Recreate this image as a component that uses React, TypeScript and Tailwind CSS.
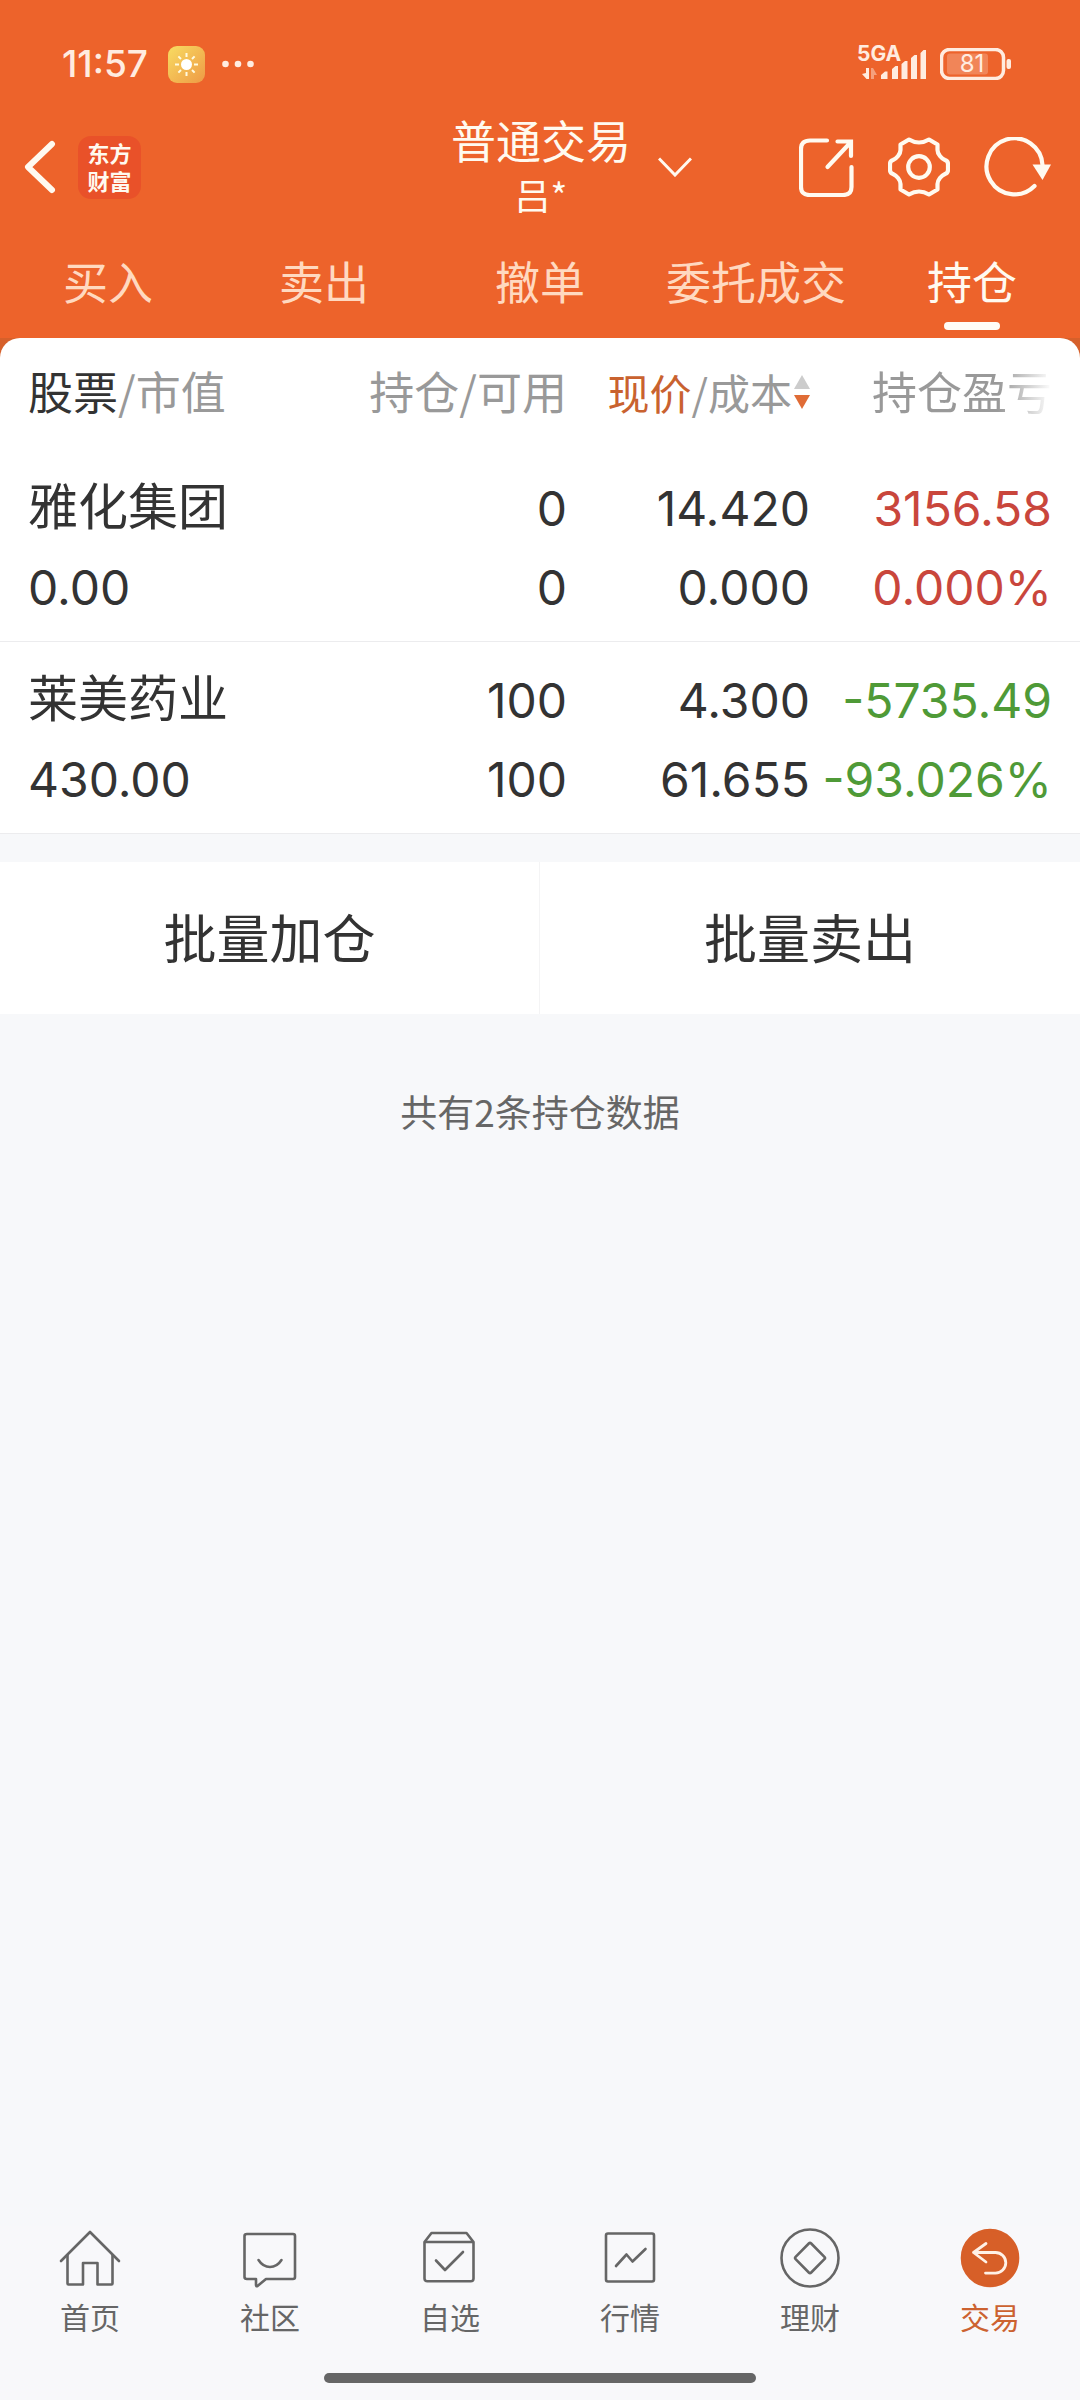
import React from "react";

const tabs = ["买入", "卖出", "撤单", "委托成交", "持仓"];

const positions = [
  {
    name: "雅化集团",
    value: "0.00",
    held: "0",
    available: "0",
    price: "14.420",
    cost: "0.000",
    profit: "3156.58",
    ratio: "0.000%",
    color: "text-[#c9463c]",
  },
  {
    name: "莱美药业",
    value: "430.00",
    held: "100",
    available: "100",
    price: "4.300",
    cost: "61.655",
    profit: "-5735.49",
    ratio: "-93.026%",
    color: "text-[#4f9a37]",
  },
];

const navItems = [
  {
    label: "首页",
    icon: (
      <>
        <path d="M3 35 32 6l29 29" />
        <path d="M9.500 29v28.500q0 1 1 1H25V37h14.500v21.500H53.500q1 0 1-1V29" />
      </>
    ),
  },
  {
    label: "社区",
    icon: (
      <>
        <path d="M9 8h46q2 0 2 2v41q0 2-2 2H28l-8.500 7q-1.500.8-1.500-1v-6H9q-2.500 0-2.500-2V10q0-2 2.500-2Z" />
        <path d="M20.500 34q4.500 7 11.500 7t11.500-7" />
      </>
    ),
  },
  {
    label: "自选",
    icon: (
      <>
        <path d="M6.500 16 13.500 7h35L55.500 16v36.500q0 2.800-2.800 2.800H9.500q-3 0-3-2.800ZM6.500 16h49" />
        <path d="M18 34.500 27 44l18-18" />
      </>
    ),
  },
  {
    label: "行情",
    icon: (
      <>
        <rect x="8" y="7.500" width="48" height="48" rx="2" />
        <path d="M18 40 28.500 28.500l6 7L47.500 23" />
      </>
    ),
  },
  {
    label: "理财",
    icon: (
      <>
        <circle cx="32" cy="32" r="28.500" />
        <path d="M30.800 17.500q1.200-1.200 2.400 0l13.200 13.300q1.200 1.200 0 2.400L33.200 46.500q-1.200 1.200-2.400 0L17.600 33.200q-1.200-1.200 0-2.400Z" />
      </>
    ),
  },
  {
    label: "交易",
    active: true,
    icon: (
      <>
        <circle cx="32" cy="32" r="28" fill="#d75f28" stroke="#d75f28" />
        <path
          d="M28 17.500 15.500 26.500 28 36M15.500 26.500H37.500a10.300 10.300 0 0 1 0 20.600H27.500"
          stroke="#fff1e6"
          strokeWidth="2.800"
        />
      </>
    ),
  },
];

const StatusBar = () => (
  <div className="flex h-28 items-center justify-between pt-4 pr-[69px] pl-[62px] text-[#ffece0]">
    <div className="flex items-center gap-5">
      <span className="font-['Inter',sans-serif] text-[37px] leading-10 font-medium">11:57</span>
      <svg width="37" height="37" viewBox="0 0 37 37" aria-hidden="true">
        <defs>
          <linearGradient id="sun" x1="0" y1="0" x2="1" y2="1">
            <stop offset="0" stopColor="#f8dc62" />
            <stop offset="1" stopColor="#ee9a45" />
          </linearGradient>
        </defs>
        <rect width="37" height="37" rx="9" fill="url(#sun)" />
        <circle cx="18.500" cy="18.500" r="5.500" fill="#fff" />
        <path
          d="M18.500 7v4M18.500 26v4M7 18.500h4M26 18.500h4M10.400 10.400l2.600 2.600M24 24l2.600 2.600M10.400 26.600 13 24M24 13l2.600-2.600"
          stroke="#fffbe0"
          strokeWidth="2"
        />
      </svg>
      <svg className="-ml-1" width="34" height="8" viewBox="0 0 34 8" fill="currentColor" aria-hidden="true">
        <circle cx="4.500" cy="4" r="3.300" />
        <circle cx="17" cy="4" r="3.300" />
        <circle cx="29.500" cy="4" r="3.300" />
      </svg>
    </div>
    <div className="flex items-center gap-[14px]">
      <div className="relative h-9 w-[68px]">
        <span className="absolute -top-[2px] -left-px font-['Inter',sans-serif] text-[21px] leading-5 font-bold">5GA</span>
        <svg width="68" height="36" viewBox="0 0 68 36" fill="currentColor" aria-hidden="true">
          <path d="M8 22h3v11H8.500L4 28l4-1Z" />
          <path d="M13 33h3v-4h3l-4-7h-2Z" opacity=".45" />
          <path d="M23 33v-4l4-3.500h2.500V33ZM34 33V23l3.500-3H40v13ZM43.500 33V18l3.500-3h2.500v18ZM53 33V12l3.500-3H59v24ZM62.500 33V7l3-3H68v29Z" />
        </svg>
      </div>
      <div className="relative flex h-8 w-[71px] items-center">
        <svg className="absolute inset-0" width="71" height="32" viewBox="0 0 71 32" aria-hidden="true">
          <rect x="1.500" y="1.500" width="62" height="29" rx="8" fill="none" stroke="currentColor" strokeWidth="3.500" />
          <rect x="7" y="5.500" width="41" height="21" rx="3" fill="currentColor" opacity=".25" />
          <rect x="66.500" y="11" width="4.500" height="10" rx="2" fill="currentColor" />
        </svg>
        <span className="w-[64px] text-center font-['Inter',sans-serif] text-2xl leading-8">81</span>
      </div>
    </div>
  </div>
);

const AppBar = () => (
  <div className="grid h-28 grid-cols-[1fr_auto_1fr] items-center pr-7 pb-[2px] pl-6 text-[#fffaf0]">
    <div className="flex items-center gap-[22px]">
      <button type="button" aria-label="返回">
        <svg width="32" height="54" viewBox="0 0 32 54" fill="none" stroke="currentColor" strokeWidth="6" strokeLinecap="round" strokeLinejoin="round">
          <path d="M28 4 4 27l24 23" />
        </svg>
      </button>
      <a
        href="#home"
        className="flex size-[63px] items-center justify-center rounded-[13px] bg-[#e95129] pb-[2px] text-center font-['Noto_Sans_CJK_SC',sans-serif] text-[22px] leading-7 font-bold"
      >
        东方
        <br />
        财富
      </a>
    </div>
    <button type="button" className="flex items-center gap-[27px] pl-[67px]">
      <span className="flex flex-col items-center pb-[2px]">
        <span className="text-[45px] leading-[56px]">普通交易</span>
        <span className="text-4xl leading-[52px]">吕*</span>
      </span>
      <svg width="34" height="20" viewBox="0 0 34 20" fill="none" stroke="currentColor" strokeWidth="3">
        <path d="M1 1.500 17 18 33 1.500" />
      </svg>
    </button>
    <div className="flex items-center justify-end gap-[34px]">
      <button type="button" aria-label="分享">
        <svg width="55" height="59" viewBox="0 0 55 59" fill="none" stroke="currentColor" strokeWidth="4.200" strokeLinecap="round">
          <path d="M28 2.500H11q-9 0-9 8.500v38q0 8 8.500 8H44q8.500 0 8.500-8V29" />
          <path d="M28.500 29 51 5M38.500 3.500H52V18" />
        </svg>
      </button>
      <button type="button" aria-label="设置">
        <svg width="62" height="60" viewBox="0 0 62 60" fill="none" stroke="currentColor" strokeWidth="4.200" strokeLinejoin="round">
          <path d="M21 2.500Q31 8.500 41 2.500l8.500 5V13c0 4 4 8.500 7.500 10q3 1 3 4v6q0 3-3 4c-3.500 1.500-7.500 6-7.500 10v5.500l-8.500 5q-10-6-20 0l-8.500-5V47c0-4-4-8.500-7.500-10Q2 36 2 33v-6q0-3 3-4c3.500-1.500 7.500-6 7.500-10V7.500Z" />
          <circle cx="31" cy="30" r="10.800" />
        </svg>
      </button>
      <button type="button" aria-label="刷新">
        <svg width="68" height="60" viewBox="0 0 68 60" fill="none" stroke="currentColor" strokeWidth="4.200" strokeLinecap="round">
          <path d="M50.500 49A28 28 0 1 1 58.500 28" />
          <path d="M48.500 27.500H67L58.500 43Z" fill="currentColor" stroke="none" />
        </svg>
      </button>
    </div>
  </div>
);

const Tabs = () => (
  <nav className="grid grid-cols-5 pt-8 pb-2">
    {tabs.map((tab) => {
      const active = tab === "持仓";
      return (
        <button key={tab} type="button" className="flex flex-col items-center gap-4">
          <span className={`text-[45px] leading-[50px] ${active ? "text-[#fffaf0]" : "text-[#ffd9c0]"}`}>{tab}</span>
          <span className={`h-2 w-14 rounded-full ${active ? "bg-[#fffcf6]" : ""}`} />
        </button>
      );
    })}
  </nav>
);

const Positions = () => (
  <table className="w-full table-fixed rounded-t-[20px] bg-white text-right text-[#333]">
    <thead>
      <tr className="h-28 text-[45px] leading-[60px] whitespace-nowrap text-[#999]">
        <th className="w-[30%] pb-[6px] pl-7 text-left font-normal">
          <span className="text-[#333]">股票</span>/市值
        </th>
        <th className="w-[22.5%] pb-[6px] font-normal">持仓/可用</th>
        <th className="w-[22.5%] pb-[6px] font-normal">
          <button type="button" className="inline-flex items-center text-[42px]">
            <span className="text-[#c9622f]">现价</span>/成本
            <svg className="ml-[2px]" width="16" height="34" viewBox="0 0 16 34" aria-hidden="true">
              <path d="M8 0 16 14H0Z" fill="#ccc" />
              <path d="M8 34 16 20H0Z" fill="#e06c36" />
            </svg>
          </button>
        </th>
        <th className="w-[25%] pr-7 pb-[6px] font-normal">
          <span className="bg-linear-to-r from-[#999] from-70% to-white bg-clip-text text-transparent">持仓盈亏</span>
        </th>
      </tr>
    </thead>
    <tbody>
      {positions.map((p) => (
        <tr key={p.name} className="border-b border-[#ececee] font-['Inter',sans-serif] text-5xl leading-[79px]">
          <td className="pt-[19px] pb-[14px] pl-7 text-left">
            <div className="pb-[10px] font-['Noto_Sans_CJK_SC',sans-serif] text-[50px] leading-[69px]">{p.name}</div>
            <div>{p.value}</div>
          </td>
          <td className="pt-[19px] pb-[14px]">
            <div>{p.held}</div>
            <div>{p.available}</div>
          </td>
          <td className="pt-[19px] pb-[14px]">
            <div>{p.price}</div>
            <div>{p.cost}</div>
          </td>
          <td className={`pt-[19px] pr-7 pb-[14px] ${p.color}`}>
            <div>{p.profit}</div>
            <div>{p.ratio}</div>
          </td>
        </tr>
      ))}
    </tbody>
  </table>
);

const BottomNav = () => (
  <footer className="bg-[#f8f8fa] pb-[17px]">
    <nav className="grid grid-cols-6">
      {navItems.map((item) => (
        <a
          key={item.label}
          href="#nav"
          className={`flex flex-col items-center gap-[6px] text-[30px] leading-10 ${item.active ? "text-[#cc6230]" : "text-[#666]"}`}
        >
          <svg width="64" height="64" viewBox="0 0 64 64" fill="none" stroke="currentColor" strokeWidth="2.600" strokeLinecap="round" strokeLinejoin="round" aria-hidden="true">
            {item.icon}
          </svg>
          {item.label}
        </a>
      ))}
    </nav>
    <div className="mx-auto mt-[37px] h-[10px] w-2/5 rounded-full bg-[#666]" />
  </footer>
);

export default function App() {
  return (
    <div className="flex min-h-screen flex-col bg-[#f7f8fa] font-['Noto_Sans_CJK_SC',sans-serif]">
      <header className="bg-[#ed632b]">
        <StatusBar />
        <AppBar />
        <Tabs />
      </header>
      <main className="flex-1">
        <div className="bg-linear-to-b from-[#d6602b] from-50% to-white to-50%">
          <Positions />
        </div>
        <div className="mt-7 grid grid-cols-2 bg-white text-[53px] leading-[72px] text-[#333]">
          <button type="button" className="border-r border-[#f4f4f5] pt-[38px] pb-[42px]">批量加仓</button>
          <button type="button" className="pt-[38px] pb-[42px]">批量卖出</button>
        </div>
        <p className="mt-[71px] text-center text-[37px] leading-[52px] text-[#666]">共有2条持仓数据</p>
      </main>
      <BottomNav />
    </div>
  );
}
